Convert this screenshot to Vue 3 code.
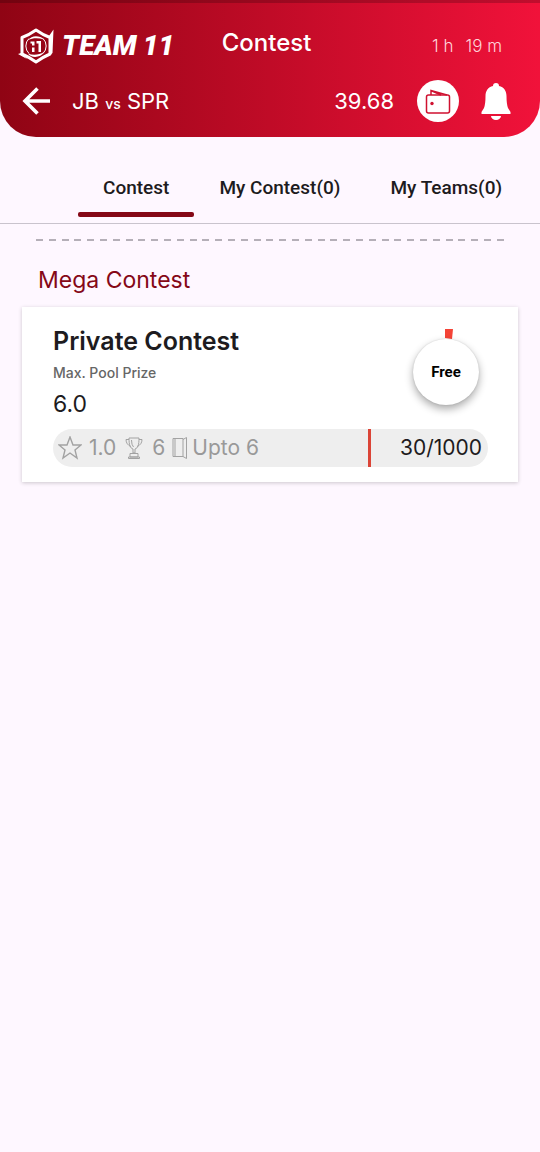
<script setup>
import { ref } from 'vue'

const tabs = ['Contest', 'My Contest(0)', 'My Teams(0)']
const active = ref(0)
</script>

<template>
  <div class="page">
    <header class="header">
      <div class="row top">
        <div class="brand">
          <svg class="emblem" viewBox="0 0 36 36" fill="none" stroke="#fff" aria-hidden="true">
            <path stroke-width="3" stroke-linejoin="round" d="M18 2Q25 7 32 9.500V26Q25 29 18 34 11 29 4 26V9.500Q11 7 18 2Z" />
            <path fill="#fff" stroke="none" d="M31 8 35.500 1.500 34.500 25 31 28ZM5 17 5 27 9 31 0 26 3 25Z" />
            <path stroke-width="1" d="M11 10.500a10.500 10.500 0 0 0 0 15M25 10.500a10.500 10.500 0 0 1 0 15" />
            <path fill="#fff" stroke="none" d="M10.500 12C13 7 22 7 26 11.500 20 9.500 14 10 10.500 12ZM10 25.500C15 27.500 21 27 26 24 23 30 13 30.500 10 25.500Z" />
            <path fill="#fff" stroke="none" d="M12.500 13.500H16.500V17.500H14V15.500H12.500ZM14 19.500H16.500V24H14ZM18.500 13H23V24H20.500V15.500H18.500Z" />
          </svg>
          <span class="wordmark"><span>TEAM</span> <span>11</span></span>
        </div>
        <h1 class="title">Contest</h1>
        <p class="timer"><span>1 h</span><span>19 m</span></p>
      </div>
      <div class="row bottom">
        <button class="icon-button" type="button" aria-label="Back">
          <svg class="back" viewBox="0 0 28 28" fill="none" stroke="#fff" stroke-width="3.600" aria-hidden="true">
            <path d="M28 14H3M15.500 1.500 3 14l12.500 12.500" />
          </svg>
        </button>
        <p class="match">JB <small>vs</small> SPR</p>
        <span class="balance">39.68</span>
        <button class="icon-button wallet" type="button" aria-label="Wallet">
          <svg width="26" height="28" viewBox="0 0 26 28" fill="none" stroke="#cf1130" stroke-width="1.500" aria-hidden="true">
            <rect x="1.500" y="8" width="23" height="18" rx="2" />
            <path d="M6 8V3.500L22 8M7 4l9 4" />
            <circle cx="7" cy="16.500" r="1.700" fill="#cf1130" stroke="none" />
          </svg>
        </button>
        <button class="icon-button bell" type="button" aria-label="Notifications">
          <svg width="30" height="37" viewBox="0 0 30 37" fill="#fff" aria-hidden="true">
            <path d="M12 3a3 3 0 0 1 6 0C23 4 25.500 8 25.500 13q0 8 1.500 12l2.500 4v2H.5v-2L3 25q1.500-4 1.500-12C4.500 8 7 4 12 3ZM10 33h10a5 4 0 0 1-10 0Z" />
          </svg>
        </button>
      </div>
    </header>

    <nav class="tabs">
      <button
        v-for="(tab, i) in tabs"
        :key="tab"
        type="button"
        class="tab"
        :class="{ active: active === i }"
        @click="active = i"
      >{{ tab }}</button>
    </nav>

    <main class="content">
      <div class="dashes" aria-hidden="true"><i v-for="n in 37" :key="n"></i></div>
      <h2 class="section">Mega Contest</h2>
      <article class="card">
        <div class="summary">
          <div>
            <h3 class="name">Private Contest</h3>
            <p class="label">Max. Pool Prize</p>
            <p class="prize">6.0</p>
          </div>
          <div class="entry">
            <svg class="mark" viewBox="0 0 8 10" aria-hidden="true"><path fill="#f44336" d="M0 0H8L7 10 0 9Z" /></svg>
            <button class="free" type="button">Free</button>
          </div>
        </div>
        <div class="pill">
          <div class="stats">
            <svg width="24" height="24" viewBox="0 0 24 24" fill="none" stroke="#a2a2a2" stroke-width="1.400" aria-hidden="true">
              <path d="m12 1 3 8h8l-6 5 2 8-7-5-7 5 2-8L1 9h8Z" />
            </svg>
            <span class="first">1.0</span>
            <svg width="18" height="22" viewBox="0 0 18 22" fill="none" stroke="#a2a2a2" stroke-width="1" aria-hidden="true">
              <path d="M4 1h10c0 7-1 10-4 11v4H8v-4C5 11 4 8 4 1ZM4 2.500H1q0 5 5 7M14 2.500h3q0 5-5 7M6.500 3q0 5 2 7M5 16.500h8V20H5ZM3.500 20h11v1.500h-11Z" />
            </svg>
            <span class="second">6</span>
            <svg width="16" height="22" viewBox="0 0 16 22" fill="none" stroke="#a2a2a2" stroke-width="1" aria-hidden="true">
              <path d="M1 1.500h10v18H1ZM11 2.500l3.500-2v21l-3.500-2M3 2v17" />
            </svg>
            <span class="third">Upto 6</span>
          </div>
          <span class="spots">30/1000</span>
        </div>
      </article>
    </main>
  </div>
</template>

<style>
body {
  margin: 0;
  background: #fef7ff;
}
</style>

<style scoped>
* {
  box-sizing: border-box;
}

.page {
  min-height: 100vh;
  background: #fef7ff;
  color: #1d1b20;
  font-family: Inter, "Open Sans", sans-serif;
}

h1, h2, h3, p {
  margin: 0;
  font-weight: 400;
}

button {
  padding: 0;
  border: 0;
  background: none;
  color: inherit;
  font: inherit;
}

svg {
  display: block;
  flex: none;
}

.header {
  padding: 24px 29px 15px 18px;
  border-top: 3px solid #0003;
  border-radius: 0 0 36px 36px;
  background: linear-gradient(90deg, #8f0414, #f1123a) border-box;
  color: #fff;
}

.row {
  display: flex;
  align-items: center;
}

.top {
  display: grid;
  grid-template-columns: 1fr auto 1fr;
  height: 38px;
}

.brand {
  display: flex;
  align-items: center;
  gap: 8px;
}

.emblem {
  width: 36px;
  height: 36px;
}

.wordmark {
  display: flex;
  gap: 6px;
  font: italic 900 28px/36px Roboto, sans-serif;
  white-space: nowrap;
}

.title {
  padding: 0 0 6px 4px;
  font-size: 24px;
  line-height: 30px;
  font-weight: 500;
}

.timer {
  display: flex;
  justify-content: flex-end;
  gap: 12px;
  padding-right: 9px;
  color: #ffd4da;
  font-size: 17px;
  font-weight: 300;
}

.bottom {
  height: 42px;
  margin-top: 15px;
  padding-left: 4px;
}

.icon-button {
  display: grid;
  place-items: center;
}

.back {
  width: 28px;
  height: 28px;
}

.match {
  flex: 1;
  margin-left: 22px;
  font-size: 22px;
}

.match small {
  font-size: 14px;
  font-weight: 500;
}

.balance {
  font-size: 22px;
}

.wallet {
  width: 42px;
  height: 42px;
  margin-left: 23px;
  border-radius: 50%;
  background: #fff;
}

.bell {
  margin-left: 22px;
}

.tabs {
  display: flex;
  height: 87px;
  padding: 22px 0 6px 78px;
  border-bottom: 1px solid #c9c3cd;
}

.tab {
  position: relative;
  flex: none;
  padding: 0 25px;
  font: 500 19px/24px Roboto, sans-serif;
}

.tab.active::after {
  content: "";
  position: absolute;
  inset: auto 0 0;
  height: 5px;
  border-radius: 2px;
  background: #850817;
}

.content {
  padding: 15px 22px;
}

.dashes {
  display: flex;
  justify-content: space-between;
  padding: 0 14px;
}

.dashes i {
  width: 7px;
  height: 2px;
  background: #b5afb8;
}

.section {
  margin: 24px 16px 12px;
  color: #850817;
  font-size: 23px;
  line-height: 30px;
}

.card {
  padding: 18px 30px 15px 31px;
  background: #fff;
  box-shadow: 0 1px 4px #0003;
}

.summary {
  display: flex;
  justify-content: space-between;
}

.name {
  font-size: 25px;
  line-height: 32px;
  font-weight: 600;
}

.label {
  color: #666;
  font-size: 14px;
  line-height: 32px;
  font-weight: 500;
}

.prize {
  font-size: 23px;
  line-height: 30px;
}

.entry {
  display: flex;
  flex-direction: column;
  align-items: center;
  padding: 4px 9px 0 0;
}

.mark {
  width: 8px;
  height: 10px;
  margin-left: 6px;
}

.free {
  width: 66px;
  height: 66px;
  border-radius: 50%;
  background: #fff;
  box-shadow: 0 4px 8px #0005, 0 0 2px #0002;
  color: #000;
  font: 700 15px/20px Roboto, sans-serif;
}

.pill {
  display: flex;
  align-items: stretch;
  justify-content: space-between;
  height: 38px;
  margin-top: 10px;
  overflow: hidden;
  border-radius: 19px;
  background: #eee;
  font-size: 21px;
  line-height: 38px;
}

.stats {
  display: flex;
  align-items: center;
  padding-left: 5px;
  color: #999;
}

.first {
  margin: 0 9px 0 7px;
}

.second {
  margin: 0 7px 0 9px;
}

.third {
  margin-left: 4px;
}

.spots {
  width: 120px;
  padding-right: 6px;
  border-left: 3px solid #db4437;
  text-align: right;
}
</style>
